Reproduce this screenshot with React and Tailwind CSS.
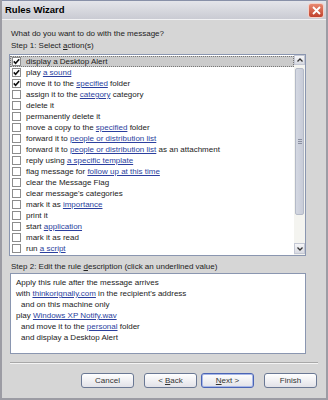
import React from "react";

const actions = [
  { parts: ["display a Desktop Alert"], checked: true, selected: true },
  { parts: ["play ", { link: "a sound" }], checked: true },
  { parts: ["move it to the ", { link: "specified" }, " folder"], checked: true },
  { parts: ["assign it to the ", { link: "category" }, " category"] },
  { parts: ["delete it"] },
  { parts: ["permanently delete it"] },
  { parts: ["move a copy to the ", { link: "specified" }, " folder"] },
  { parts: ["forward it to ", { link: "people or distribution list" }] },
  { parts: ["forward it to ", { link: "people or distribution list" }, " as an attachment"] },
  { parts: ["reply using ", { link: "a specific template" }] },
  { parts: ["flag message for ", { link: "follow up at this time" }] },
  { parts: ["clear the Message Flag"] },
  { parts: ["clear message's categories"] },
  { parts: ["mark it as ", { link: "importance" }] },
  { parts: ["print it"] },
  { parts: ["start ", { link: "application" }] },
  { parts: ["mark it as read"] },
  { parts: ["run ", { link: "a script" }] },
];

const description = [
  { indent: false, parts: ["Apply this rule after the message arrives"] },
  { indent: false, parts: ["with ", { link: "thinkorignally.com" }, " in the recipient's address"] },
  { indent: true, parts: ["and on this machine only"] },
  { indent: false, parts: ["play ", { link: "Windows XP Notify.wav" }] },
  { indent: true, parts: ["and move it to the ", { link: "personal" }, " folder"] },
  { indent: true, parts: ["and display a Desktop Alert"] },
];

function Parts({ parts }) {
  return parts.map((p, i) =>
    typeof p === "string" ? (
      <span key={i}>{p}</span>
    ) : (
      <span key={i} className="text-[#2b3f9e] underline">
        {p.link}
      </span>
    )
  );
}

function CheckBox({ checked }) {
  return (
    <div className="w-[9px] h-[9px] border border-[#8c8c8c] bg-white flex items-center justify-center shrink-0">
      {checked && (
        <svg width="7" height="7" viewBox="0 0 7 7">
          <path d="M0.8 3.4 L2.6 5.3 L6.2 1.2" fill="none" stroke="#111" strokeWidth="1.6" />
        </svg>
      )}
    </div>
  );
}

function Btn({ children, focus }) {
  return (
    <div
      className={`w-[53px] h-[15px] rounded-[3px] border flex items-center justify-center text-[#333] bg-gradient-to-b from-white to-[#e2e2e8] ${
        focus ? "border-[#4a64b4] shadow-[inset_0_0_0_1px_#a8b8e8]" : "border-[#6a7894]"
      }`}
    >
      {children}
    </div>
  );
}

export default function App() {
  return (
    <div className="w-[328px] h-[400px] flex flex-col bg-[#d6d6d6] border-x-2 border-b-2 border-[#9c9ca4] font-['Liberation_Sans',Arial,sans-serif] text-[8px] text-[#222] overflow-hidden">
      {/* title bar */}
      <div className="h-[20px] shrink-0 flex items-center justify-between pl-[3px] pr-[2px] bg-gradient-to-b from-[#e4e5ea] to-[#cacbd3] border-t border-[#8890a8] border-b border-b-[#f2f2f4]">
        <span className="font-bold text-[9.5px] text-black">Rules Wizard</span>
        <div className="w-[16px] h-[15px] rounded-[3px] border border-[#f4d0c8] bg-gradient-to-b from-[#e88870] to-[#c0402c] flex items-center justify-center">
          <svg width="9" height="9" viewBox="0 0 9 9">
            <path d="M1 1 L8 8 M8 1 L1 8" stroke="white" strokeWidth="1.8" />
          </svg>
        </div>
      </div>

      <div className="flex-1 flex flex-col">
        <div className="mt-[8px] ml-[9px] h-[12px] leading-[12px]">What do you want to do with the message?</div>
        <div className="ml-[9px] h-[12px] leading-[12px]">
          Step 1: Select <span className="underline">a</span>ction(s)
        </div>

        {/* action list */}
        <div className="mt-[2px] ml-[7px] w-[297px] h-[202px] border border-[#8a96b0] bg-white flex">
          <div className="flex-1 pt-[1px]">
            {actions.map((a, i) => (
              <div
                key={i}
                className={`h-[11px] flex items-center pl-[2px] ${
                  a.selected ? "bg-[#cbcbcb] outline outline-1 outline-dotted outline-[#777] -outline-offset-1" : ""
                }`}
              >
                <CheckBox checked={a.checked} />
                <span className="ml-[5px] leading-[11px] whitespace-nowrap">
                  <Parts parts={a.parts} />
                </span>
              </div>
            ))}
          </div>
          {/* scrollbar */}
          <div className="w-[11px] flex flex-col bg-[#f4f4f0]">
            <div className="h-[10px] border border-[#c4c8d4] bg-gradient-to-b from-[#f6f6f8] to-[#d8dae2] flex items-center justify-center">
              <svg width="6" height="4" viewBox="0 0 6 4">
                <path d="M0.5 3.5 L3 1 L5.5 3.5" fill="none" stroke="#333" strokeWidth="1.3" />
              </svg>
            </div>
            <div className="flex-1 flex flex-col items-center">
              <div className="mt-[3px] w-[9px] h-[147px] rounded-[2px] border border-[#b4bac8] bg-gradient-to-r from-[#d4d8e2] to-[#c8ccd8] flex items-center justify-center">
                <div className="flex flex-col gap-[1px]">
                  <div className="w-[4px] h-px bg-[#8a8fa0]" />
                  <div className="w-[4px] h-px bg-[#8a8fa0]" />
                  <div className="w-[4px] h-px bg-[#8a8fa0]" />
                </div>
              </div>
            </div>
            <div className="h-[11px] mb-[1px] border border-[#c4c8d4] bg-gradient-to-b from-[#f6f6f8] to-[#d8dae2] flex items-center justify-center">
              <svg width="6" height="4" viewBox="0 0 6 4">
                <path d="M0.5 0.5 L3 3 L5.5 0.5" fill="none" stroke="#333" strokeWidth="1.3" />
              </svg>
            </div>
          </div>
        </div>

        <div className="mt-[5px] ml-[9px] h-[12px] leading-[12px]">
          Step 2: Edit the rule <span className="underline">d</span>escription (click an underlined value)
        </div>

        {/* description */}
        <div className="ml-[8px] w-[296px] h-[81px] border border-[#8a96b0] bg-white pt-[3px] pl-[5px]">
          {description.map((d, i) => (
            <div key={i} className={`h-[11px] leading-[11px] whitespace-nowrap ${d.indent ? "pl-[5px]" : ""}`}>
              <Parts parts={d.parts} />
            </div>
          ))}
        </div>

        <div className="mt-[8px] ml-[8px] w-[308px] h-[2px] border-t border-[#a8a8a8] border-b border-b-[#f4f4f4]" />

        <div className="mt-[9px] flex justify-end pr-[9px]">
          <Btn>Cancel</Btn>
          <div className="ml-[10px]">
            <Btn>
              &lt; <span className="underline ml-[2px]">B</span>ack
            </Btn>
          </div>
          <div className="ml-[4px]">
            <Btn focus>
              <span className="underline">N</span>ext &gt;
            </Btn>
          </div>
          <div className="ml-[10px]">
            <Btn>Finish</Btn>
          </div>
        </div>
      </div>
    </div>
  );
}
